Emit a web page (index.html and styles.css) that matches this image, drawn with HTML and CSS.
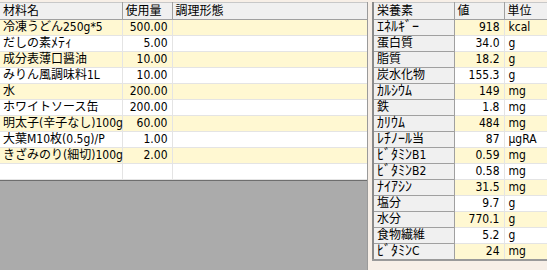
FILE: index.html
```html
<!DOCTYPE html>
<html lang="ja">
<head>
<meta charset="utf-8">
<link rel="stylesheet" href="styles.css">
</head>
<body>
<div class="app">
  <div class="left">
    <table class="grid ingr">
      <colgroup><col class="c1"><col class="c2"><col class="c3"></colgroup>
      <thead>
        <tr><th>材料名</th><th>使用量</th><th>調理形態</th></tr>
      </thead>
      <tbody>
        <tr class="y"><td>冷凍うどん250g*5</td><td class="num">500.00</td><td></td></tr>
        <tr><td>だしの素<span class="hk">ﾒﾃｨ</span></td><td class="num">5.00</td><td></td></tr>
        <tr class="y"><td>成分表薄口醤油</td><td class="num">10.00</td><td></td></tr>
        <tr><td>みりん風調味料1L</td><td class="num">10.00</td><td></td></tr>
        <tr class="y"><td>水</td><td class="num">200.00</td><td></td></tr>
        <tr><td>ホワイトソース缶</td><td class="num">200.00</td><td></td></tr>
        <tr class="y"><td>明太子(辛子なし)100g</td><td class="num">60.00</td><td></td></tr>
        <tr><td>大葉M10枚(0.5g)/P</td><td class="num">1.00</td><td></td></tr>
        <tr class="y"><td>きざみのり(細切)100g</td><td class="num">2.00</td><td></td></tr>
        <tr><td></td><td></td><td></td></tr>
      </tbody>
    </table>
    <div class="empty"></div>
  </div>
  <div class="right">
    <table class="grid nutr">
      <colgroup><col class="n1"><col class="n2"><col class="n3"></colgroup>
      <thead>
        <tr><th>栄養素</th><th>値</th><th>単位</th></tr>
      </thead>
      <tbody>
        <tr class="y"><th><span class="hk">ｴﾈﾙｷﾞｰ</span></th><td class="num">918</td><td class="unit">kcal</td></tr>
        <tr><th>蛋白質</th><td class="num">34.0</td><td class="unit">g</td></tr>
        <tr class="y"><th>脂質</th><td class="num">18.2</td><td class="unit">g</td></tr>
        <tr><th>炭水化物</th><td class="num">155.3</td><td class="unit">g</td></tr>
        <tr class="y"><th><span class="hk">ｶﾙｼｳﾑ</span></th><td class="num">149</td><td class="unit">mg</td></tr>
        <tr><th>鉄</th><td class="num">1.8</td><td class="unit">mg</td></tr>
        <tr class="y"><th><span class="hk">ｶﾘｳﾑ</span></th><td class="num">484</td><td class="unit">mg</td></tr>
        <tr><th><span class="hk">ﾚﾁﾉｰﾙ</span>当</th><td class="num">87</td><td class="unit">μgRA</td></tr>
        <tr class="y"><th><span class="hk">ﾋﾞﾀﾐﾝ</span>B1</th><td class="num">0.59</td><td class="unit">mg</td></tr>
        <tr><th><span class="hk">ﾋﾞﾀﾐﾝ</span>B2</th><td class="num">0.58</td><td class="unit">mg</td></tr>
        <tr class="y"><th><span class="hk">ﾅｲｱｼﾝ</span></th><td class="num">31.5</td><td class="unit">mg</td></tr>
        <tr><th>塩分</th><td class="num">9.7</td><td class="unit">g</td></tr>
        <tr class="y"><th>水分</th><td class="num">770.1</td><td class="unit">g</td></tr>
        <tr><th>食物繊維</th><td class="num">5.2</td><td class="unit">g</td></tr>
        <tr class="y"><th><span class="hk">ﾋﾞﾀﾐﾝ</span>C</th><td class="num">24</td><td class="unit">mg</td></tr>
      </tbody>
    </table>
  </div>
</div>
</body>
</html>
```
FILE: styles.css
```css
html, body {
  margin: 0;
  padding: 0;
  background: #f7efe7;
}
body {
  font-family: "Liberation Sans Narrow", "DejaVu Sans Condensed", "Noto Sans CJK JP", sans-serif;
  font-size: 12px;
  color: #000;
}
.hk {
  font-family: "Noto Sans CJK JP", sans-serif;
  font-size: 14px;
  line-height: 11px;
}
.app {
  display: flex;
  gap: 4px;
  width: 547px;
  height: 270px;
  padding-top: 2px;
  box-sizing: border-box;
}
.left {
  width: 368px;
  display: flex;
  flex-direction: column;
  border-right: 1px solid #9a9a9a;
  box-sizing: border-box;
}
.empty {
  flex: 1;
  background: #ababab;
  border-top: 1px solid #6e6e6e;
}
.grid {
  border-collapse: collapse;
  table-layout: fixed;
  background: #fff;
}
.grid th, .grid td {
  height: 15px;
  line-height: 15px;
  padding: 0 2px;
  white-space: nowrap;
  font-weight: normal;
  text-align: left;
}
.grid thead th {
  height: 16px;
  line-height: 16px;
  background: #f0f0f0;
  border: 1px solid #a0a0a0;
  border-top-color: #c8c8c8;
  padding-left: 3px;
}
.grid td {
  border: 1px solid #e4e4e4;
}
.grid tr.y td {
  background: #fff8d2;
}
.ingr {
  width: 367px;
}
.ingr .c1 { width: 122px; }
.ingr .c2 { width: 50px; }
.ingr .c3 { width: 195px; }
.ingr thead th:first-child { border-left: none; }
.ingr thead th:last-child { border-right: none; }
.ingr td:first-child { border-left: none; padding-left: 3px; }
.ingr td:last-child { border-right: none; }
.num {
  text-align: right !important;
  padding-right: 4px !important;
}
.right {
  flex: 1;
}
.nutr {
  width: 175px;
  border-left: 2px solid #8a8a8a;
}
.nutr .n1 { width: 81px; }
.nutr .n2 { width: 50px; }
.nutr .n3 { width: 44px; }
.nutr tbody th {
  background: #f0f0f0;
  border: 1px solid #a0a0a0;
  padding-left: 3px;
}
.nutr tbody tr:last-child th, .nutr tbody tr:last-child td {
  border-bottom: 2px solid #9a9a9a;
}
.nutr thead th:last-child, .nutr td.unit { border-right: none; }
.unit {
  padding-left: 4px !important;
}
```
